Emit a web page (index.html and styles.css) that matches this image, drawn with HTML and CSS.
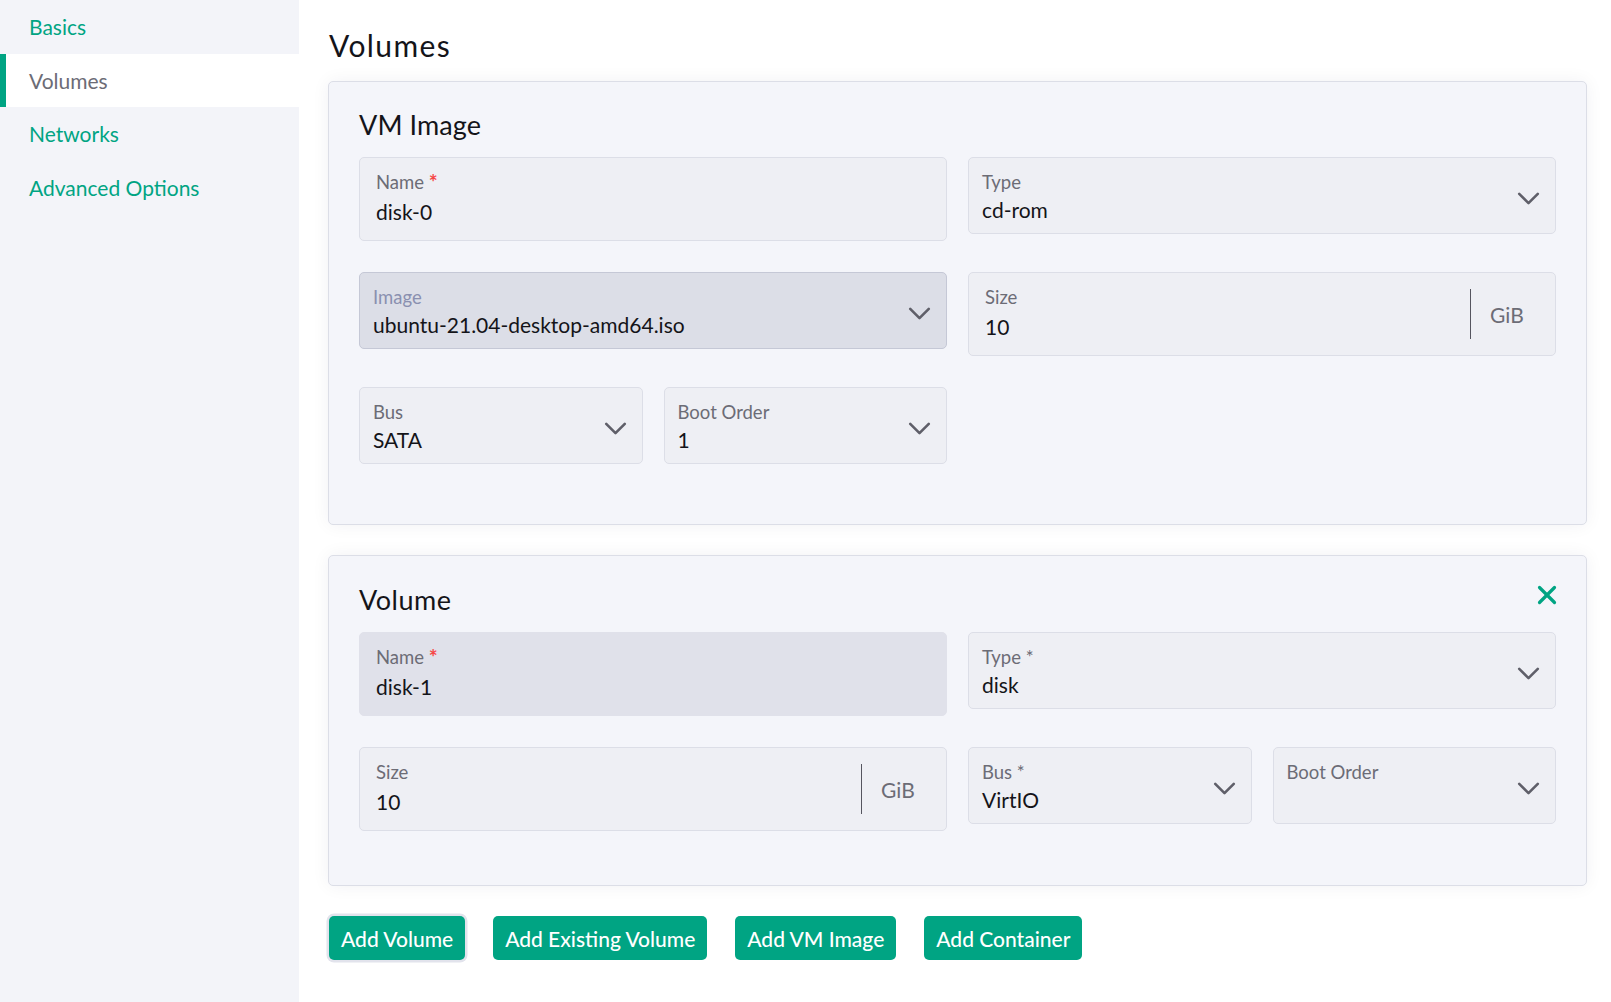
FILE: index.html
```html
<!DOCTYPE html>
<html lang="en">
<head>
<meta charset="utf-8">
<title>Volumes</title>
<link rel="stylesheet" href="styles.css">
</head>
<body>
<aside class="sidebar">
  <a class="nav-item">Basics</a>
  <a class="nav-item active">Volumes</a>
  <a class="nav-item">Networks</a>
  <a class="nav-item">Advanced Options</a>
</aside>
<main class="main">
  <h1 class="page-title">Volumes</h1>

  <section class="card">
    <div class="card-head">
      <h2 class="card-title">VM Image</h2>
    </div>
    <div class="grid">
      <div class="field input span2">
        <div class="field-body">
          <div class="label">Name <span class="req">*</span></div>
          <div class="value">disk-0</div>
        </div>
      </div>
      <div class="field select span2">
        <div class="field-body">
          <div class="label">Type</div>
          <div class="value">cd-rom</div>
        </div>
        <svg class="chev" viewBox="0 0 24 14"><polyline points="2,2 12,12 22,2"/></svg>
      </div>
      <div class="field select span2 disabled">
        <div class="field-body">
          <div class="label">Image</div>
          <div class="value">ubuntu-21.04-desktop-amd64.iso</div>
        </div>
        <svg class="chev" viewBox="0 0 24 14"><polyline points="2,2 12,12 22,2"/></svg>
      </div>
      <div class="field input span2 with-addon">
        <div class="field-body">
          <div class="label">Size</div>
          <div class="value">10</div>
        </div>
        <div class="addon">GiB</div>
      </div>
      <div class="field select">
        <div class="field-body">
          <div class="label">Bus</div>
          <div class="value">SATA</div>
        </div>
        <svg class="chev" viewBox="0 0 24 14"><polyline points="2,2 12,12 22,2"/></svg>
      </div>
      <div class="field select">
        <div class="field-body">
          <div class="label">Boot Order</div>
          <div class="value">1</div>
        </div>
        <svg class="chev" viewBox="0 0 24 14"><polyline points="2,2 12,12 22,2"/></svg>
      </div>
    </div>
  </section>

  <section class="card">
    <div class="card-head">
      <h2 class="card-title">Volume</h2>
      <button class="remove" aria-label="Remove">
        <svg viewBox="0 0 20 20"><line x1="2.5" y1="2.5" x2="17.5" y2="17.5"/><line x1="17.5" y1="2.5" x2="2.5" y2="17.5"/></svg>
      </button>
    </div>
    <div class="grid">
      <div class="field input span2 focused">
        <div class="field-body">
          <div class="label">Name <span class="req">*</span></div>
          <div class="value">disk-1</div>
        </div>
      </div>
      <div class="field select span2">
        <div class="field-body">
          <div class="label">Type *</div>
          <div class="value">disk</div>
        </div>
        <svg class="chev" viewBox="0 0 24 14"><polyline points="2,2 12,12 22,2"/></svg>
      </div>
      <div class="field input span2 with-addon">
        <div class="field-body">
          <div class="label">Size</div>
          <div class="value">10</div>
        </div>
        <div class="addon">GiB</div>
      </div>
      <div class="field select">
        <div class="field-body">
          <div class="label">Bus *</div>
          <div class="value">VirtIO</div>
        </div>
        <svg class="chev" viewBox="0 0 24 14"><polyline points="2,2 12,12 22,2"/></svg>
      </div>
      <div class="field select">
        <div class="field-body">
          <div class="label">Boot Order</div>
          <div class="value">&nbsp;</div>
        </div>
        <svg class="chev" viewBox="0 0 24 14"><polyline points="2,2 12,12 22,2"/></svg>
      </div>
    </div>
  </section>

  <div class="actions">
    <button class="btn focus">Add Volume</button>
    <button class="btn">Add Existing Volume</button>
    <button class="btn">Add VM Image</button>
    <button class="btn">Add Container</button>
  </div>
</main>
</body>
</html>
```

FILE: styles.css
```css
* { box-sizing: border-box; }

html, body {
  margin: 0;
  padding: 0;
  height: 100%;
}

body {
  display: flex;
  font-family: Lato, "Liberation Sans", sans-serif;
  color: #141419;
  background: #ffffff;
  min-height: 1002px;
}

.sidebar {
  width: 299px;
  flex: 0 0 299px;
  background: #f3f4f9;
  display: flex;
  flex-direction: column;
}

.nav-item {
  display: flex;
  align-items: center;
  height: 53.5px;
  padding-left: 29px;
  font-size: 21px;
  color: #00a483;
  cursor: pointer;
}

.nav-item.active {
  background: #ffffff;
  color: #6c6c76;
  border-left: 6px solid #00a483;
  padding-left: 23px;
}

.main {
  flex: 1;
  padding: 28px 24px 0 29px;
  display: flex;
  flex-direction: column;
}

.page-title {
  margin: 0 0 18px 1px;
  font-size: 30px;
  line-height: 35px;
  font-weight: 400;
  letter-spacing: 1.4px;
}

.card {
  background: #f4f5fa;
  border: 1px solid #dcdee7;
  border-radius: 5px;
  padding: 27px 30px 53px 30px;
  margin-bottom: 30px;
  box-shadow: 0 0 18px rgba(30, 30, 60, 0.06);
}

.card + .card {
  padding-bottom: 54px;
}

.card-head {
  display: flex;
  align-items: center;
  justify-content: space-between;
  margin-bottom: 16px;
}

.card-title {
  margin: 0;
  font-size: 27px;
  line-height: 32px;
  font-weight: 400;
  letter-spacing: 0.1px;
}

.card + .card .card-title {
  letter-spacing: 0.5px;
  position: relative;
  top: 1px;
}

.remove {
  background: none;
  border: 0;
  padding: 0;
  width: 20px;
  height: 20px;
  margin-right: -1px;
  margin-top: -8px;
  cursor: pointer;
}

.remove svg {
  width: 20px;
  height: 20px;
  display: block;
  stroke: #00a483;
  stroke-width: 3.2;
  stroke-linecap: round;
}

.grid {
  display: grid;
  grid-template-columns: repeat(4, 1fr);
  column-gap: 21px;
  row-gap: 31px;
  grid-auto-rows: 84px;
  align-items: start;
}

.card + .card .grid {
  padding-top: 1px;
}

.span2 { grid-column: span 2; }

.field {
  display: flex;
  align-items: center;
  background: #eeeff4;
  border: 1px solid #dcdee7;
  border-radius: 5px;
  position: relative;
}

.field.input {
  height: 84px;
  padding: 0 16px;
}

.field.select {
  height: 77px;
  padding: 0 15px 0 13px;
}

.field-body {
  flex: 1;
  min-width: 0;
  display: flex;
  flex-direction: column;
}

.field.input .field-body { margin-top: -3px; }
.field.select .field-body { padding-top: 3px; }

.label {
  font-size: 18.5px;
  line-height: 22px;
  color: #6c6c76;
}

.req {
  color: #f64747;
  font-size: 21px;
  line-height: 18px;
  font-weight: 700;
  position: relative;
  top: 1px;
}

.value {
  font-size: 21px;
  line-height: 26px;
  margin-top: 6px;
  color: #141419;
  white-space: nowrap;
}

.field.select .value { margin-top: 4px; }

.chev {
  width: 23px;
  height: 13px;
  flex: 0 0 23px;
  margin-top: 6px;
  fill: none;
  stroke: #5f5f69;
  stroke-width: 2.8;
  stroke-linecap: round;
  stroke-linejoin: round;
}

.field.disabled {
  background: #dcdee7;
  border-color: #c5c8d6;
}

.field.disabled .label { color: #8a90b0; }

.field.focused {
  background: #e0e1ea;
  border-color: #e0e1ea;
}

.field.with-addon {
  padding-right: 0;
}

.addon {
  align-self: stretch;
  display: flex;
  align-items: center;
  margin: 16px 0;
  padding: 0 0 0 19px;
  width: 85px;
  border-left: 1px solid #55555f;
  font-size: 21px;
  color: #6c6c76;
}

.actions {
  display: flex;
  gap: 28px;
  padding-left: 1px;
}

.btn {
  height: 44px;
  padding: 0 12px;
  border: 0;
  border-radius: 5px;
  background: #00a483;
  color: #ffffff;
  font-family: Lato, "Liberation Sans", sans-serif;
  font-size: 21px;
  font-weight: 500;
  cursor: pointer;
}

.btn.focus {
  box-shadow: 0 0 0 2.5px #e2e3ec;
}
```
